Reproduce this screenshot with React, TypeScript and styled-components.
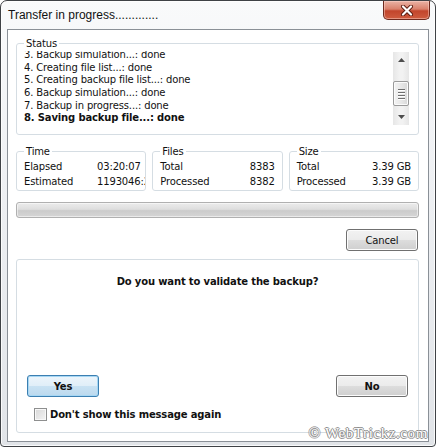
import React, { useLayoutEffect, useRef } from "react";
import styled, { createGlobalStyle } from "styled-components";

// Data
const statusLines = [
  "1. Preparing backup...: done",
  "2. Scanning source...: done",
  "3. Backup simulation...: done",
  "4. Creating file list...: done",
  "5. Creating backup file list...: done",
  "6. Backup simulation...: done",
  "7. Backup in progress...: done",
  "8. Saving backup file...: done",
];

const GlobalStyle = createGlobalStyle`
  html, body {
    margin: 0;
    padding: 0;
    background: #ffffff;
  }
  * {
    box-sizing: border-box;
  }
`;

const UI_FONT = `"DejaVu Sans", "Liberation Sans", sans-serif`;

type Align = "left" | "right";

function CloseGlyph() {
  return (
    <svg width="14" height="11" viewBox="0 0 14 11">
      <path d="M3 1.5 L11 9.5 M11 1.5 L3 9.5" stroke="#5a1c10" strokeWidth="4" strokeLinecap="round" />
      <path d="M3 1.5 L11 9.5 M11 1.5 L3 9.5" stroke="#ffffff" strokeWidth="2.2" strokeLinecap="round" />
    </svg>
  );
}

function Arrow({ dir }: { dir: "up" | "down" }) {
  return (
    <svg width="7" height="4" viewBox="0 0 7 4">
      {dir === "up" ? (
        <path d="M0 4 L3.5 0 L7 4 Z" fill="#4d4d4d" />
      ) : (
        <path d="M0 0 L7 0 L3.5 4 Z" fill="#4d4d4d" />
      )}
    </svg>
  );
}

function Stat({ label, value, align }: { label: string; value: string; align: Align }) {
  return (
    <StatLine $align={align}>
      <span>{label}</span>
      <Value $align={align}>{value}</Value>
    </StatLine>
  );
}

function App() {
  const listRef = useRef<HTMLDivElement>(null);

  useLayoutEffect(() => {
    // list is scrolled to the latest step
    const el = listRef.current;
    if (el) el.scrollTop = el.scrollHeight;
  }, []);

  return (
    <>
      <GlobalStyle />
      <Window>
        <TitleBar>
          <Title>Transfer in progress.............</Title>
          <CloseBtn>
            <CloseGlyph />
          </CloseBtn>
        </TitleBar>

        <Client>
          <Group>
            <Legend>Status</Legend>
            <StatusBody>
              <StatusList ref={listRef}>
                {statusLines.map((line, i) => (
                  <StatusLine key={line} $current={i === statusLines.length - 1}>
                    {line}
                  </StatusLine>
                ))}
              </StatusList>
              <ScrollBar>
                <ScrollArrow>
                  <Arrow dir="up" />
                </ScrollArrow>
                <ScrollTrack>
                  <Thumb>
                    <Grip />
                    <Grip />
                    <Grip />
                    <Grip />
                  </Thumb>
                </ScrollTrack>
                <ScrollArrow>
                  <Arrow dir="down" />
                </ScrollArrow>
              </ScrollBar>
            </StatusBody>
          </Group>

          <StatsRow>
            <StatGroup>
              <Legend>Time</Legend>
              <Stat label="Elapsed" value="03:20:07" align="left" />
              <Stat label="Estimated" value="1193046:2" align="left" />
            </StatGroup>
            <StatGroup>
              <Legend>Files</Legend>
              <Stat label="Total" value="8383" align="right" />
              <Stat label="Processed" value="8382" align="right" />
            </StatGroup>
            <StatGroup>
              <Legend>Size</Legend>
              <Stat label="Total" value="3.39 GB" align="right" />
              <Stat label="Processed" value="3.39 GB" align="right" />
            </StatGroup>
          </StatsRow>

          <Progress />

          <CancelRow>
            <Button>Cancel</Button>
          </CancelRow>

          <Panel>
            <Question>Do you want to validate the backup?</Question>
            <ButtonRow>
              <Button $default $bold>
                Yes
              </Button>
              <Button $bold>No</Button>
            </ButtonRow>
            <CheckRow>
              <CheckBox />
              <CheckLabel>Don't show this message again</CheckLabel>
            </CheckRow>
          </Panel>
        </Client>

        <Watermark>© WebTrickz.com</Watermark>
      </Window>
    </>
  );
}

export default App;

const Window = styled.div`
  position: relative;
  width: 436px;
  height: 447px;
  display: flex;
  flex-direction: column;
  border: 1px solid #3f4246;
  border-radius: 7px 7px 4px 4px;
  background: linear-gradient(180deg, #f9fafb 0%, #eef0f3 40%, #e1e4e8 100%);
  box-shadow: inset 0 0 0 1px rgba(255, 255, 255, 0.8);
  overflow: hidden;
`;

const TitleBar = styled.div`
  height: 28px;
  flex: none;
  display: flex;
  align-items: flex-start;
  justify-content: space-between;
  padding: 0 5px 0 7px;
`;

const Title = styled.div`
  margin-top: 6px;
  font-family: "Liberation Sans", Arial, sans-serif;
  font-size: 12px;
  line-height: 16px;
  color: #111;
`;

const CloseBtn = styled.div`
  width: 47px;
  height: 19px;
  display: flex;
  align-items: center;
  justify-content: center;
  border: 1px solid #6e2a1e;
  border-top: none;
  border-radius: 0 0 5px 5px;
  background: linear-gradient(180deg, #eab3a5 0%, #d9816c 45%, #c2452c 55%, #cf5c3f 100%);
  box-shadow: inset 0 0 0 1px rgba(255, 220, 210, 0.45);
`;

const Client = styled.div`
  flex: 1;
  display: flex;
  flex-direction: column;
  margin: 0 6px 4px 6px;
  padding: 7px 9px 8px 8px;
  border: 1px solid #8a9097;
  background: #ffffff;
  font-family: ${UI_FONT};
  font-size: 10px;
  letter-spacing: -0.15px;
  color: #111;
`;

const Group = styled.fieldset`
  margin: 0;
  padding: 1px 9px 9px 7px;
  border: 1px solid #d5dde3;
  border-radius: 3px;
  min-width: 0;
`;

const Legend = styled.legend`
  padding: 0 2px;
  margin-left: 0;
  font-size: 10px;
  line-height: 13px;
  color: #111;
`;

const StatusBody = styled.div`
  display: flex;
  height: 74px;
`;

const StatusList = styled.div`
  flex: 1;
  overflow: hidden;
`;

const StatusLine = styled.div<{ $current?: boolean }>`
  height: 12.6px;
  line-height: 12.6px;
  white-space: nowrap;
  font-weight: ${(p) => (p.$current ? 700 : 400)};
`;

const ScrollBar = styled.div`
  width: 16px;
  margin-top: 1px;
  display: flex;
  flex-direction: column;
  background: linear-gradient(90deg, #e6e6e6, #f2f2f2 40%, #f2f2f2 60%, #e6e6e6);
`;

const ScrollArrow = styled.div`
  height: 16px;
  display: flex;
  align-items: center;
  justify-content: center;
`;

const ScrollTrack = styled.div`
  flex: 1;
  display: flex;
  flex-direction: column;
  justify-content: flex-end;
  padding-bottom: 3px;
`;

const Thumb = styled.div`
  height: 25px;
  display: flex;
  flex-direction: column;
  align-items: center;
  justify-content: center;
  gap: 2px;
  border: 1px solid #9a9a9a;
  border-radius: 2px;
  background: linear-gradient(90deg, #f3f3f3, #e8e8e8 50%, #d8d8d8);
  box-shadow: inset 0 0 0 1px #fbfbfb;
`;

const Grip = styled.div`
  width: 7px;
  height: 1px;
  background: #6f6f6f;
  box-shadow: 0 1px 0 #ffffff;
`;

const StatsRow = styled.div`
  display: grid;
  grid-template-columns: repeat(3, 1fr);
  gap: 6px;
  margin-top: 10px;
`;

const StatGroup = styled.fieldset`
  margin: 0;
  padding: 1px 7px 1px 7px;
  min-width: 0;
  border: 1px solid #d5dde3;
  border-radius: 3px;
  overflow: hidden;
`;

const StatLine = styled.div<{ $align: Align }>`
  height: 15px;
  line-height: 15px;
  display: grid;
  grid-template-columns: ${(p) => (p.$align === "left" ? "73px 1fr" : "1fr auto")};
  white-space: nowrap;
`;

const Value = styled.span<{ $align: Align }>`
  text-align: ${(p) => p.$align};
`;

const Progress = styled.div`
  height: 16px;
  margin-top: 11px;
  border: 1px solid #b0b0b0;
  border-radius: 3px;
  background: linear-gradient(180deg, #ececec 0%, #dedede 45%, #cbcbcb 55%, #d6d6d6 100%);
  box-shadow: inset 0 0 0 1px rgba(255, 255, 255, 0.5);
`;

const CancelRow = styled.div`
  display: flex;
  justify-content: flex-end;
  margin-top: 11px;
  padding-right: 1px;
`;

const Button = styled.div<{ $default?: boolean; $bold?: boolean }>`
  width: 72px;
  height: 22px;
  display: flex;
  align-items: center;
  justify-content: center;
  border: 1px solid ${(p) => (p.$default ? "#3c7fb1" : "#707070")};
  border-radius: 3px;
  font-size: 10px;
  font-weight: ${(p) => (p.$bold ? 700 : 400)};
  color: #111;
  background: ${(p) =>
    p.$default
      ? "linear-gradient(180deg, #edf5fb 0%, #e0eef8 50%, #c9e2f3 51%, #bcd9ee 100%)"
      : "linear-gradient(180deg, #f2f2f2 0%, #ebebeb 50%, #dddddd 51%, #cfcfcf 100%)"};
  box-shadow: inset 0 0 0 1px ${(p) => (p.$default ? "#a6d7f4" : "#fcfcfc")};
`;

const Panel = styled.div`
  flex: 1;
  display: flex;
  flex-direction: column;
  margin-top: 8px;
  padding: 15px 10px 11px 10px;
  border: 1px solid #d5dde3;
  border-radius: 3px;
`;

const Question = styled.div`
  text-align: center;
  font-weight: 700;
  line-height: 13px;
`;

const ButtonRow = styled.div`
  display: flex;
  justify-content: space-between;
  margin-top: auto;
`;

const CheckRow = styled.div`
  display: flex;
  align-items: center;
  gap: 3px;
  margin-top: 11px;
  padding-left: 7px;
`;

const CheckBox = styled.div`
  width: 13px;
  height: 13px;
  border: 1px solid #8e8f8f;
  background: linear-gradient(135deg, #d8d8d8, #f4f4f4);
  box-shadow: inset 0 0 0 1px #f8f8f8;
`;

const CheckLabel = styled.span`
  font-weight: 700;
  line-height: 13px;
`;

const Watermark = styled.div`
  position: absolute;
  right: 7px;
  bottom: 4px;
  font-family: "Liberation Serif", serif;
  font-size: 15px;
  letter-spacing: 0.6px;
  color: #ffffff;
  text-shadow: 1px 0 0 #8c8c8c, -1px 0 0 #8c8c8c, 0 1px 0 #8c8c8c, 0 -1px 0 #8c8c8c;
`;
